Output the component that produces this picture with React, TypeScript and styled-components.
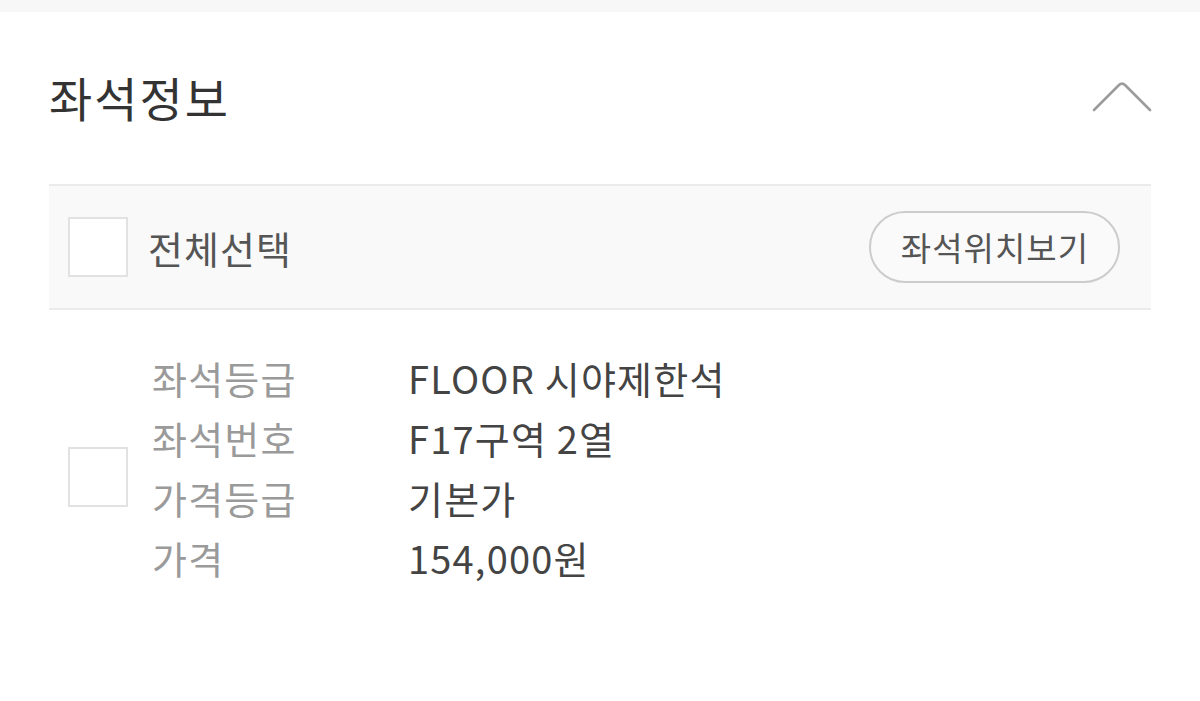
import styled, { createGlobalStyle } from "styled-components";

const GlobalStyle = createGlobalStyle`
    html, body {
        margin: 0;
        padding: 0;
        background: #ffffff;
        font-family: "Noto Sans CJK KR", "Noto Sans", sans-serif;
    }
`;

type SeatField = { label: string, value: string };

const seatFields: SeatField[] = [
    { label: "좌석등급", value: "FLOOR 시야제한석" },
    { label: "좌석번호", value: "F17구역 2열" },
    { label: "가격등급", value: "기본가" },
    { label: "가격", value: "154,000원" },
];

const TopStrip = styled.div`
    height: 12px;
    background: #f7f7f7;
`;

const Section = styled.section`
    padding: 0 49px;
`;

const Header = styled.header`
    height: 172px;
    padding-bottom: 4px;
    box-sizing: border-box;
    display: flex;
    align-items: center;
    justify-content: space-between;
`;

const Title = styled.h2`
    margin: 0;
    font-size: 47px;
    font-weight: 400;
    color: #333333;
    letter-spacing: 2px;
`;

const Toggle = styled.button`
    border: 0;
    background: none;
    padding: 0;
    margin-right: -1px;
    display: flex;
    cursor: pointer;
`;

const SelectBar = styled.div`
    height: 126px;
    box-sizing: border-box;
    background: #f9f9f9;
    border-top: 2px solid #ebebeb;
    border-bottom: 2px solid #ebebeb;
    display: flex;
    align-items: center;
    padding: 0 31px 0 19px;
`;

const Check = styled.span<{ $offset?: number }>`
    flex: none;
    width: 60px;
    height: 60px;
    box-sizing: border-box;
    border: 2px solid #e2e2e2;
    background: #ffffff;
    margin-top: ${p => p.$offset ?? 0}px;
`;

const SelectLabel = styled.span`
    margin-left: 20px;
    font-size: 38px;
    letter-spacing: 1px;
    color: #555555;
    flex: 1;
`;

const PillButton = styled.button`
    height: 72px;
    padding: 0 29px 0 30px;
    border: 2px solid #cccccc;
    border-radius: 36px;
    background: #fafafa;
    font-family: inherit;
    font-size: 33px;
    letter-spacing: 1px;
    color: #555555;
    cursor: pointer;
`;

const ItemRow = styled.div`
    display: flex;
    align-items: flex-start;
    padding: 38px 0 0 19px;
`;

const FieldList = styled.dl`
    margin: 0 0 0 24px;
    display: grid;
    grid-template-columns: 256px auto;
    line-height: 60px;
    font-size: 38px;
    letter-spacing: 1.2px;
`;

const FieldLabel = styled.dt`
    color: #9a9a9a;
`;

const FieldValue = styled.dd`
    margin: 0;
    color: #444444;
`;

const ChevronUp = () => (
    <svg width="60" height="34" viewBox="0 0 60 34" fill="none">
        <path d="M2 31 L27 6 Q30 3 33 6 L58 31" stroke="#9c9c9c" strokeWidth="2.6" strokeLinecap="round" strokeLinejoin="round" />
    </svg>
);

export default function App() {
    return (
        <>
            <GlobalStyle />
            <TopStrip />
            <Section>
                <Header>
                    <Title>좌석정보</Title>
                    <Toggle aria-label="접기"><ChevronUp /></Toggle>
                </Header>
                <SelectBar>
                    <Check />
                    <SelectLabel>전체선택</SelectLabel>
                    <PillButton>좌석위치보기</PillButton>
                </SelectBar>
                <ItemRow>
                    <Check $offset={99} />
                    <FieldList>
                        {seatFields.map(f => (
                            <>
                                <FieldLabel key={f.label + "l"}>{f.label}</FieldLabel>
                                <FieldValue key={f.label + "v"}>{f.value}</FieldValue>
                            </>
                        ))}
                    </FieldList>
                </ItemRow>
            </Section>
        </>
    );
}
